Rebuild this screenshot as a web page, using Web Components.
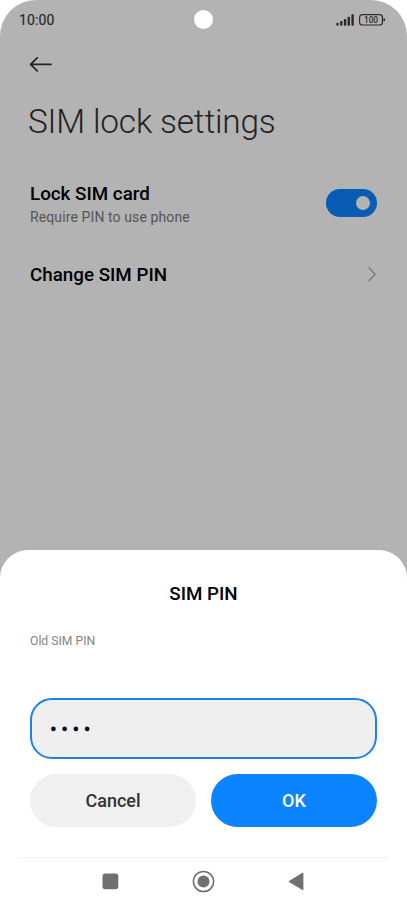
<!DOCTYPE html>
<html lang="en">
<head>
<meta charset="utf-8">
<title>SIM lock settings</title>
<style>
html,body{margin:0;background:#fff}
body{font-family:Roboto,"Liberation Sans",sans-serif}
</style>
</head>
<body>
<phone-screen></phone-screen>
<script>
const define=(name,html)=>{
  const t=document.createElement('template');
  t.innerHTML=html;
  customElements.define(name,class extends HTMLElement{
    constructor(){super();this.attachShadow({mode:'open'}).append(t.content.cloneNode(true));}
  });
};

define('status-bar',`<style>
:host{display:flex;height:40px;box-sizing:border-box;padding:0 21px 0 19px;align-items:center;justify-content:space-between;position:relative;color:#2b2b2b}
.time{font-size:14px;line-height:20px;letter-spacing:.1px;-webkit-text-stroke:.2px}
.camera{position:absolute;left:194px;top:10px;width:19px;height:19px;border-radius:50%;background:#fff}
svg{display:block}
</style>
<span class="time">10:00</span><i class="camera"></i>
<svg width="51" height="14" viewBox="0 0 51 14">
<g fill="#2b2b2b"><rect x="1.3" y="9.8" width="2.4" height="3" rx="1"/><rect x="5.1" y="8" width="2.4" height="4.8" rx=".8"/><rect x="8.9" y="6" width="2.4" height="6.8" rx=".8"/><rect x="12.6" y="3.7" width="2.4" height="9.1" rx=".8"/><rect x="16.4" y="1.2" width="2.4" height="11.6" rx=".8"/></g>
<rect x="24.6" y="1.6" width="22.8" height="10.4" rx="2.8" fill="none" stroke="#2b2b2b" stroke-width="1.2"/>
<path d="M48.5 5q1.7.2 1.7 1.8t-1.7 1.8z" fill="#2b2b2b"/>
<text x="36" y="9.8" text-anchor="middle" font-size="8.3" font-weight="500" fill="#2b2b2b">100</text></svg>`);

define('page-header',`<style>
:host{display:block;padding:16px 28px 0}
svg{display:block;margin-left:1px}
h1{margin:25px 0 0;font-weight:300;font-size:33.4px;line-height:48px;letter-spacing:-.18px;color:#222;white-space:nowrap}
</style>
<svg width="24" height="17" viewBox="0 0 24 17" fill="none" stroke="#222" stroke-width="1.7" stroke-linecap="round" stroke-linejoin="round"><path d="M22 8.4H1.8M8.2 1.8 1.6 8.4l6.6 6.5"/></svg>
<h1><slot></slot></h1>`);

define('setting-row',`<style>
:host{display:flex;align-items:center;justify-content:space-between;padding:0 30px}
.title{font-size:18.8px;font-weight:500;line-height:24px;color:#000}
::slotted([slot=note]){display:block;font-size:14px;letter-spacing:.11px;line-height:20px;margin-top:1px;color:#555}
</style>
<div><div class="title"><slot></slot></div><slot name="note"></slot></div><slot name="control"></slot>`);

define('toggle-switch',`<style>
:host{display:flex;width:51px;height:28px;border-radius:14px;background:#085cb4;box-sizing:border-box;padding-right:7px;align-items:center;justify-content:flex-end;margin-bottom:4px}
i{width:14px;height:14px;border-radius:50%;background:#b3b3b3}
</style><i></i>`);

define('chevron-icon',`<style>:host{display:block}svg{display:block}</style>
<svg width="10" height="16" viewBox="0 0 10 16" fill="none" stroke="#777" stroke-width="1.3"><path d="M1.5.4 8.2 7.2l-6.7 6.8"/></svg>`);

define('pin-field',`<style>
:host{display:flex;align-items:center;height:61px;box-sizing:border-box;border:2px solid #1a82ed;border-radius:22px;background:#efefef;padding:1px 0 0 18px;color:#000;font-size:20px;letter-spacing:4.5px;-webkit-text-stroke:.4px}
</style><span><slot></slot></span>`);

define('pill-button',`<style>
:host{display:flex;flex:1;height:53px;border-radius:26.5px;align-items:center;justify-content:center;background:#f0f0f0;color:#333;font-size:18px;font-weight:500}
:host([primary]){background:#0d84ff;color:#fff}
</style><slot></slot>`);

define('pin-dialog',`<style>
:host{display:block;height:356px;box-sizing:border-box;background:#fff;border-radius:28px 28px 0 0;padding:31px 30px 0}
h2{margin:0;text-align:center;font-size:18.75px;line-height:26px;font-weight:500;color:#000}
label{display:block;font-size:12.2px;line-height:18px;margin:25px 0 48px;color:#858585}
.buttons{display:flex;gap:15px;margin-top:15px}
</style>
<h2>SIM PIN</h2><label>Old SIM PIN</label><pin-field>••••</pin-field>
<div class="buttons"><pill-button>Cancel</pill-button><pill-button primary>OK</pill-button></div>
<nav-bar></nav-bar>`);

define('nav-bar',`<style>
:host{display:block;margin:30px -12px 0;border-top:1px solid #f3f3f3}
div{display:flex;justify-content:space-between;align-items:center;padding:12px 84px 0 83px}
svg{display:block}
</style><div>
<svg width="18" height="24" viewBox="0 0 18 24"><rect x="1.5" y="3.4" width="15.8" height="15.9" rx="2.7" fill="#707070"/></svg>
<svg width="24" height="24" viewBox="0 0 24 24"><circle cx="12.5" cy="11.5" r="10.1" fill="none" stroke="#707070" stroke-width="1.5"/><circle cx="12.5" cy="11.5" r="6" fill="#707070"/></svg>
<svg width="18" height="24" viewBox="0 0 18 24"><path d="M15.8 3.2v16.4L2.3 11.4z" fill="#707070" stroke="#707070" stroke-width="1.2" stroke-linejoin="round"/></svg></div>`);

define('phone-screen',`<style>
:host{display:flex;flex-direction:column;width:407px;height:906px;background:#b3b3b3;border-radius:36px 36px 0 0;overflow:hidden}
.lock{margin-top:36px}.change{margin-top:36px}
pin-dialog{margin-top:auto}
</style>
<status-bar></status-bar>
<page-header>SIM lock settings</page-header>
<setting-row class="lock">Lock SIM card<span slot="note">Require PIN to use phone</span><toggle-switch slot="control"></toggle-switch></setting-row>
<setting-row class="change">Change SIM PIN<chevron-icon slot="control"></chevron-icon></setting-row>
<pin-dialog></pin-dialog>
`);
</script>
</body>
</html>
